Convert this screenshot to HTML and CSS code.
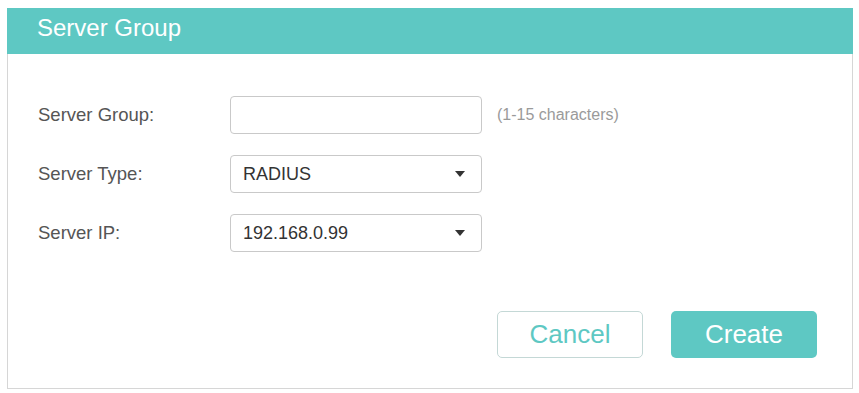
FILE: index.html
```html
<!DOCTYPE html>
<html lang="en">
<head>
  <meta charset="UTF-8">
  <meta name="viewport" content="width=device-width, initial-scale=1.0">
  <title>Server Group</title>
  <link rel="stylesheet" href="styles.css">
</head>
<body>
  <div class="dialog">
    <div class="dialog-header">Server Group</div>
    <div class="dialog-body">
      <div class="form-row">
        <label for="groupName">Server Group:</label>
        <input type="text" id="groupName" class="field">
        <span class="hint">(1-15 characters)</span>
      </div>
      <div class="form-row">
        <label>Server Type:</label>
        <div class="field select">
          <span>RADIUS</span>
          <span class="caret"></span>
        </div>
      </div>
      <div class="form-row">
        <label>Server IP:</label>
        <div class="field select">
          <span>192.168.0.99</span>
          <span class="caret"></span>
        </div>
      </div>
      <div class="actions">
        <button class="btn btn-cancel">Cancel</button>
        <button class="btn btn-create">Create</button>
      </div>
    </div>
  </div>
</body>
</html>
```

FILE: styles.css
```css
body {
  font-family: 'Liberation Sans', Arial, sans-serif;
  margin: 0;
  padding: 8px 7px;
  background: #fff;
}
.dialog {
  width: 846px;
  height: 381px;
  box-sizing: border-box;
  border: 1px solid #d6d6d6;
  border-top: none;
  display: flex;
  flex-direction: column;
}
.dialog-header {
  background: #5ec8c3;
  color: #fff;
  font-size: 24px;
  height: 46px;
  box-sizing: border-box;
  padding: 0 0 6px 30px;
  margin: 0 -1px;
  display: flex;
  align-items: center;
}
.dialog-body {
  padding: 42px 35px 0 30px;
  display: flex;
  flex-direction: column;
  gap: 21px;
}
.form-row {
  display: flex;
  align-items: center;
}
.form-row label {
  width: 192px;
  font-size: 18.5px;
  color: #555;
}
.field {
  width: 252px;
  height: 38px;
  box-sizing: border-box;
  border: 1px solid #c9c9c9;
  border-radius: 4px;
  background: #fff;
  margin: 0;
  font-family: inherit;
}
.select {
  display: flex;
  align-items: center;
  justify-content: space-between;
  padding: 0 16px 0 12px;
  font-size: 18px;
  color: #333;
}
.caret {
  width: 0;
  height: 0;
  border-left: 5px solid transparent;
  border-right: 5px solid transparent;
  border-top: 6px solid #333;
}
.hint {
  margin-left: 15px;
  font-size: 16px;
  color: #9a9a9a;
}
.actions {
  display: flex;
  justify-content: flex-end;
  gap: 28px;
  margin-top: 38px;
}
.btn {
  width: 146px;
  height: 47px;
  border-radius: 5px;
  font-family: inherit;
  font-size: 26px;
  cursor: pointer;
}
.btn-cancel {
  background: #fff;
  border: 1px solid #c4d8d6;
  color: #5ec8c3;
}
.btn-create {
  background: #5ec8c3;
  border: none;
  color: #fff;
}
```
